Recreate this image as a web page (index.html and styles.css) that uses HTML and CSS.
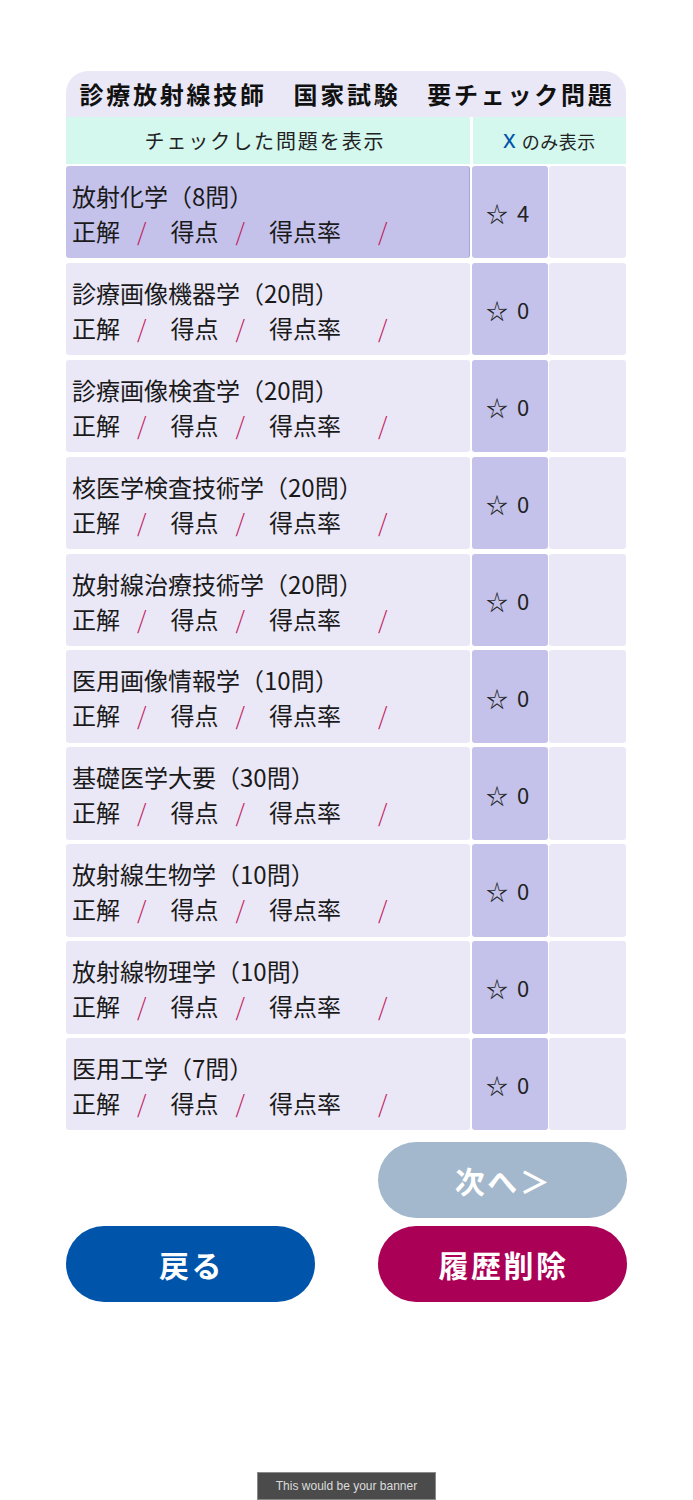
FILE: index.html
```html
<!DOCTYPE html>
<html lang="ja">
<head>
<meta charset="utf-8">
<title>要チェック問題</title>
<link rel="stylesheet" href="styles.css">
</head>
<body>
<main class="page">
  <section class="board">
    <h1 class="title">診療放射線技師　国家試験　要チェック問題</h1>
    <div class="head">
      <div class="head-cell wide">チェックした問題を表示</div>
      <div class="head-cell small"><span class="x">X</span>のみ表示</div>
    </div>
    <div class="rows">
      <div class="row active">
        <div class="name"><div class="cat">放射化学（8問）</div><div class="stats"><span>正解</span><span class="sl">/</span><span>得点</span><span class="sl">/</span><span>得点率</span><span class="sl last">/</span></div></div>
        <div class="star"><span class="st">☆</span><span>4</span></div><div class="blank"></div>
      </div>
      <div class="row">
        <div class="name"><div class="cat">診療画像機器学（20問）</div><div class="stats"><span>正解</span><span class="sl">/</span><span>得点</span><span class="sl">/</span><span>得点率</span><span class="sl last">/</span></div></div>
        <div class="star"><span class="st">☆</span><span>0</span></div><div class="blank"></div>
      </div>
      <div class="row">
        <div class="name"><div class="cat">診療画像検査学（20問）</div><div class="stats"><span>正解</span><span class="sl">/</span><span>得点</span><span class="sl">/</span><span>得点率</span><span class="sl last">/</span></div></div>
        <div class="star"><span class="st">☆</span><span>0</span></div><div class="blank"></div>
      </div>
      <div class="row">
        <div class="name"><div class="cat">核医学検査技術学（20問）</div><div class="stats"><span>正解</span><span class="sl">/</span><span>得点</span><span class="sl">/</span><span>得点率</span><span class="sl last">/</span></div></div>
        <div class="star"><span class="st">☆</span><span>0</span></div><div class="blank"></div>
      </div>
      <div class="row">
        <div class="name"><div class="cat">放射線治療技術学（20問）</div><div class="stats"><span>正解</span><span class="sl">/</span><span>得点</span><span class="sl">/</span><span>得点率</span><span class="sl last">/</span></div></div>
        <div class="star"><span class="st">☆</span><span>0</span></div><div class="blank"></div>
      </div>
      <div class="row">
        <div class="name"><div class="cat">医用画像情報学（10問）</div><div class="stats"><span>正解</span><span class="sl">/</span><span>得点</span><span class="sl">/</span><span>得点率</span><span class="sl last">/</span></div></div>
        <div class="star"><span class="st">☆</span><span>0</span></div><div class="blank"></div>
      </div>
      <div class="row">
        <div class="name"><div class="cat">基礎医学大要（30問）</div><div class="stats"><span>正解</span><span class="sl">/</span><span>得点</span><span class="sl">/</span><span>得点率</span><span class="sl last">/</span></div></div>
        <div class="star"><span class="st">☆</span><span>0</span></div><div class="blank"></div>
      </div>
      <div class="row">
        <div class="name"><div class="cat">放射線生物学（10問）</div><div class="stats"><span>正解</span><span class="sl">/</span><span>得点</span><span class="sl">/</span><span>得点率</span><span class="sl last">/</span></div></div>
        <div class="star"><span class="st">☆</span><span>0</span></div><div class="blank"></div>
      </div>
      <div class="row">
        <div class="name"><div class="cat">放射線物理学（10問）</div><div class="stats"><span>正解</span><span class="sl">/</span><span>得点</span><span class="sl">/</span><span>得点率</span><span class="sl last">/</span></div></div>
        <div class="star"><span class="st">☆</span><span>0</span></div><div class="blank"></div>
      </div>
      <div class="row">
        <div class="name"><div class="cat">医用工学（7問）</div><div class="stats"><span>正解</span><span class="sl">/</span><span>得点</span><span class="sl">/</span><span>得点率</span><span class="sl last">/</span></div></div>
        <div class="star"><span class="st">☆</span><span>0</span></div><div class="blank"></div>
      </div>
    </div>
    <div class="actions">
      <div class="act-row end"><button class="btn next">次へ＞</button></div>
      <div class="act-row split"><button class="btn back">戻る</button><button class="btn del">履歴削除</button></div>
    </div>
  </section>
</main>
<div class="banner">This would be your banner</div>
</body>
</html>
```
FILE: styles.css
```css
* { box-sizing: border-box; }
html, body { margin: 0; padding: 0; background: #ffffff; }
body {
  font-family: "Noto Sans CJK JP", "Noto Sans", sans-serif;
  color: #1a1a1a;
}
.page { padding-top: 71px; }
.board { width: 560px; margin: 0 0 0 66px; }
.title {
  margin: 0;
  height: 46px;
  background: #eae8f7;
  border-radius: 22px 22px 0 0;
  font-size: 24px;
  font-weight: 700;
  letter-spacing: 2.75px;
  line-height: 46px;
  text-align: center;
  color: #111;
  white-space: nowrap;
  padding-left: 2px;
}
.head {
  display: grid;
  grid-template-columns: 404px 153px;
  column-gap: 3px;
  height: 47px;
  margin-bottom: 2px;
}
.head-cell {
  background: #d4f7ee;
  display: flex;
  align-items: center;
  justify-content: center;
  font-size: 20px;
  letter-spacing: 1.9px;
  color: #222;
}
.head-cell.wide { padding-right: 6px; }
.head-cell.small { font-size: 18px; letter-spacing: 0.5px; }
.x {
  color: #0055aa;
  font-family: "Noto Sans", sans-serif;
  font-weight: 500;
  font-size: 20px;
  margin-right: 6px;
}
.rows { display: flex; flex-direction: column; gap: 4.5px; }
.row {
  display: grid;
  grid-template-columns: 404px 76px 77px;
  column-gap: 1.5px;
  height: 92.4px;
}
.name {
  background: #eae8f7;
  border-radius: 3px;
  padding: 12px 0 0 6px;
  font-size: 24px;
  line-height: 35px;
  white-space: nowrap;
}
.row.active .name { background: #c4c2ea; border-right: 1px solid #a9a7c9; }
.stats { display: flex; }
.sl { color: #c2185b; margin: 0 24px 0 17px; font-weight: 300; }
.sl.last { margin-left: 37px; }
.star {
  background: #c4c2ea;
  border-radius: 3px;
  display: flex;
  align-items: center;
  justify-content: center;
  font-size: 22px;
  color: #222;
  padding-right: 4px;
}
.st { margin-right: 9px; }
.blank { background: #eae8f7; border-radius: 3px; }
.actions { margin-top: 12px; display: flex; flex-direction: column; gap: 8px; }
.act-row { display: flex; }
.act-row.end { justify-content: flex-end; margin-right: -1px; }
.act-row.split { justify-content: space-between; margin-right: -1px; }
.btn {
  width: 249px;
  height: 76px;
  border: none;
  border-radius: 38px;
  color: #fff;
  font-family: "Noto Sans CJK JP", sans-serif;
  font-size: 30px;
  font-weight: 700;
  letter-spacing: 2.5px;
  padding: 0 0 0 2px;
}
.next { background: #a3b8cc; }
.back { background: #0055aa; }
.del { background: #aa0055; }
.banner {
  position: fixed;
  bottom: 0;
  left: 257px;
  width: 179px;
  height: 28px;
  background: #4b4b4b;
  border: 1px solid #8a8a8a;
  color: #dcdcdc;
  font-family: "Liberation Sans", Arial, sans-serif;
  font-size: 12px;
  line-height: 26px;
  text-align: center;
}
```
